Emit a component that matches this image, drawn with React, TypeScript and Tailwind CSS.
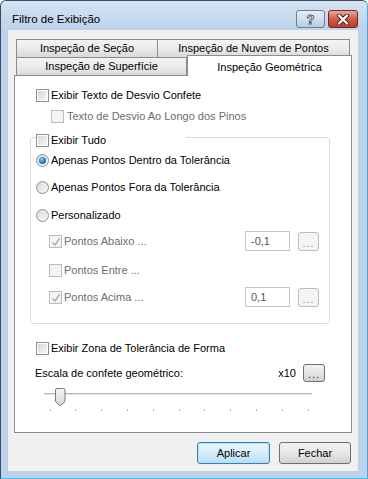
import React from 'react';

function CheckBox({ checked = false, disabled = false }: { checked?: boolean; disabled?: boolean }) {
  return (
    <span
      className={`relative flex w-[13px] h-[13px] shrink-0 p-[1px] border ${
        disabled ? 'border-[#bcbcbc] bg-[#f4f4f4]' : 'border-[#8e8f8f] bg-white'
      }`}
    >
      <span
        className={`block w-full h-full ${
          disabled ? 'bg-[#f4f4f4]' : 'bg-linear-to-br from-[#d3d7dc] to-[#f7f7f8]'
        }`}
      />
      {checked && (
        <svg className="absolute left-[1px] top-[1px]" width="10" height="10" viewBox="0 0 10 10">
          <path d="M1.5 5.5 L4 8 L8.5 1.5" fill="none" stroke={disabled ? '#b4b4b4' : '#1f3b6d'} strokeWidth="1.6" />
        </svg>
      )}
    </span>
  );
}

function Radio({ checked = false }: { checked?: boolean }) {
  return (
    <span className="flex items-center justify-center w-[13px] h-[13px] shrink-0 rounded-full border border-[#8e8f8f] bg-linear-to-br from-[#d5d9de] to-[#fafafa]">
      {checked && (
        <span className="block w-[7px] h-[7px] rounded-full bg-[radial-gradient(circle_at_40%_35%,#8fd6ff_0%,#2b86d0_45%,#0b3f78_100%)]" />
      )}
    </span>
  );
}

function Dots({ disabled = false, strong = false }: { disabled?: boolean; strong?: boolean }) {
  return (
    <div
      className={`flex items-end justify-center pb-[4px] rounded-[3px] border ${
        disabled
          ? 'border-[#b9bdc1] bg-[#f4f4f4] text-[#8a8a8a]'
          : 'border-[#707070] bg-linear-to-b from-[#f2f2f2] via-[#e6e6e6] to-[#cfcfcf] text-[#2a1a4a]'
      } ${strong ? 'w-[22px] h-[18px]' : 'w-[21px] h-[19px]'}`}
    >
      <span className="leading-[6px] h-[6px] tracking-[1px]">...</span>
    </div>
  );
}

function TabHead({ label, className }: { label: string; className: string }) {
  return (
    <div
      className={`flex items-center justify-center border border-b-0 border-[#898c95] bg-linear-to-b from-[#f3f3f3] via-[#ebebeb] to-[#d9d9d9] ${className}`}
    >
      {label}
    </div>
  );
}

export default function App() {
  const ticks = Array.from({ length: 11 }, (_, i) => 9.5 + i * 25.8);

  return (
    <div className="w-[368px] h-[479px] bg-white font-['Liberation_Sans',Arial,sans-serif] text-[11px] text-black">
      <div className="flex flex-col h-full rounded-t-[6px] border border-[#3b4b5e] border-r-[#4aa9cc] border-b-[#45c2e4] bg-[#bdd3eb]">
        {/* title bar */}
        <div className="flex h-[29px] rounded-t-[5px] bg-linear-to-b from-[#d3e2f3] to-[#bdd3eb]">
          <span className="mt-[11px] ml-[11px] leading-[14px] text-[11.5px]">Filtro de Exibição</span>
          <div className="ml-auto mt-[9px] mr-[9px] flex gap-[3px]">
            <div className="w-[29px] h-[18px] rounded-[3px] border border-[#6b7c91] bg-linear-to-b from-[#e6edf6] via-[#d3dfec] to-[#b7cadf] flex items-center justify-center">
              <span className="font-bold text-[13px] leading-none text-white [-webkit-text-stroke:0.8px_#45546a]">?</span>
            </div>
            <div className="w-[30px] h-[18px] rounded-[3px] border border-[#6e2a24] bg-linear-to-b from-[#e9a99b] via-[#cf5d48] to-[#bd3b28] flex items-center justify-center">
              <svg width="14" height="11" viewBox="0 0 14 11">
                <path d="M3 1.5 L11 9.5 M11 1.5 L3 9.5" stroke="#4a1d18" strokeWidth="4.2" strokeLinecap="round" />
                <path d="M3 1.5 L11 9.5 M11 1.5 L3 9.5" stroke="#ffffff" strokeWidth="2.4" strokeLinecap="round" />
              </svg>
            </div>
          </div>
        </div>

        {/* client */}
        <div className="ml-[7px] w-[350px] h-[441px] bg-[#f0f0f0] flex flex-col">
          <div className="ml-[6px] mt-[9px] w-[338px] flex flex-col">
            <div className="flex pl-[2px] h-[18px]">
              <TabHead label="Inspeção de Seção" className="w-[142px] h-[18px]" />
              <TabHead label="Inspeção de Nuvem de Pontos" className="w-[193px] h-[18px] -ml-px" />
            </div>
            <div className="flex items-start pl-[2px] h-[21px] -mt-[2px] relative z-10">
              <TabHead label="Inspeção de Superfície" className="w-[171px] h-[18px] mt-[2px]" />
              <div className="w-[165px] h-[21px] border border-b-0 border-[#898c95] bg-white flex justify-center pt-[3px]">
                Inspeção Geométrica
              </div>
            </div>

            {/* pane */}
            <div className="-mt-[1px] w-[338px] h-[358px] border border-[#898c95] bg-white flex flex-col pt-[11px]">
              <div className="ml-[21px] h-[16px] flex items-center">
                <CheckBox />
                <span className="ml-[2px]">Exibir Texto de Desvio Confete</span>
              </div>
              <div className="mt-[5px] ml-[36px] h-[16px] flex items-center text-[#6d6d6d]">
                <CheckBox disabled />
                <span className="ml-[3px]">Texto de Desvio Ao Longo dos Pinos</span>
              </div>

              {/* group box */}
              <div className="mt-[13px] ml-[15px] w-[300px] h-[187px] rounded-[3px] border border-[#d5dfe5] flex flex-col">
                <div className="-mt-[6px] ml-[5px] w-[150px] h-[16px] bg-white flex items-center">
                  <CheckBox />
                  <span className="ml-[2px]">Exibir Tudo</span>
                </div>
                <div className="mt-[4px] ml-[5px] h-[16px] flex items-center">
                  <Radio checked />
                  <span className="ml-[2px]">Apenas Pontos Dentro da Tolerância</span>
                </div>
                <div className="mt-[11px] ml-[5px] h-[16px] flex items-center">
                  <Radio />
                  <span className="ml-[2px]">Apenas Pontos Fora da Tolerância</span>
                </div>
                <div className="mt-[12px] ml-[5px] h-[16px] flex items-center">
                  <Radio />
                  <span className="ml-[2px]">Personalizado</span>
                </div>
                <div className="mt-[8px] ml-[18px] mr-[10px] h-[20px] flex items-center text-[#6d6d6d]">
                  <CheckBox checked disabled />
                  <span className="ml-[2px] flex-1">Pontos Abaixo ...</span>
                  <div className="w-[45px] h-[20px] border border-[#c3c6ca] flex items-center pl-[5px] text-[#555]">-0,1</div>
                  <div className="ml-[8px]">
                    <Dots disabled />
                  </div>
                </div>
                <div className="mt-[11px] ml-[18px] h-[16px] flex items-center text-[#6d6d6d]">
                  <CheckBox disabled />
                  <span className="ml-[2px]">Pontos Entre ...</span>
                </div>
                <div className="mt-[9px] ml-[18px] mr-[10px] h-[20px] flex items-center text-[#6d6d6d]">
                  <CheckBox checked disabled />
                  <span className="ml-[2px] flex-1">Pontos Acima ...</span>
                  <div className="w-[45px] h-[20px] border border-[#c3c6ca] flex items-center pl-[5px] text-[#555]">0,1</div>
                  <div className="ml-[8px]">
                    <Dots disabled />
                  </div>
                </div>
              </div>

              <div className="mt-[16px] ml-[21px] h-[16px] flex items-center">
                <CheckBox />
                <span className="ml-[2px]">Exibir Zona de Tolerância de Forma</span>
              </div>
              <div className="mt-[8px] ml-[20px] mr-[26px] h-[18px] flex items-center">
                <span className="flex-1">Escala de confete geométrico:</span>
                <span className="mr-[7px]">x10</span>
                <Dots strong />
              </div>
              <div className="mt-[4px] ml-[25px]">
                <svg width="280" height="28" viewBox="0 0 280 28">
                  <defs>
                    <linearGradient id="thumb" x1="0" y1="0" x2="0" y2="1">
                      <stop offset="0" stopColor="#f6f6f6" />
                      <stop offset="1" stopColor="#d4d4d4" />
                    </linearGradient>
                  </defs>
                  <rect x="4" y="7" width="268" height="1" fill="#b8b8b8" />
                  <rect x="4" y="8" width="268" height="1" fill="#e4e4e4" />
                  <path
                    d="M15.5 4 Q15.5 2.5 17 2.5 H23.5 Q25 2.5 25 4 V15.5 L20.25 20 L15.5 15.5 Z"
                    fill="url(#thumb)"
                    stroke="#7a7a7a"
                  />
                  {ticks.map((x) => (
                    <rect key={x} x={Math.round(x)} y="23" width="1" height="2" fill="#b4b4b4" />
                  ))}
                </svg>
              </div>
            </div>
          </div>

          {/* buttons */}
          <div className="mt-[9px] pr-[7px] flex justify-end gap-[9px]">
            <div className="w-[73px] h-[22px] rounded-[3px] border border-[#3c7fb1] bg-linear-to-b from-[#e9f6fd] via-[#d6eefb] to-[#b6ddf3] shadow-[inset_0_0_0_1px_#a8e3fb] flex items-center justify-center">
              Aplicar
            </div>
            <div className="w-[72px] h-[22px] rounded-[3px] border border-[#707070] bg-linear-to-b from-[#f2f2f2] via-[#e8e8e8] to-[#d0d0d0] flex items-center justify-center">
              Fechar
            </div>
          </div>
        </div>
      </div>
    </div>
  );
}
